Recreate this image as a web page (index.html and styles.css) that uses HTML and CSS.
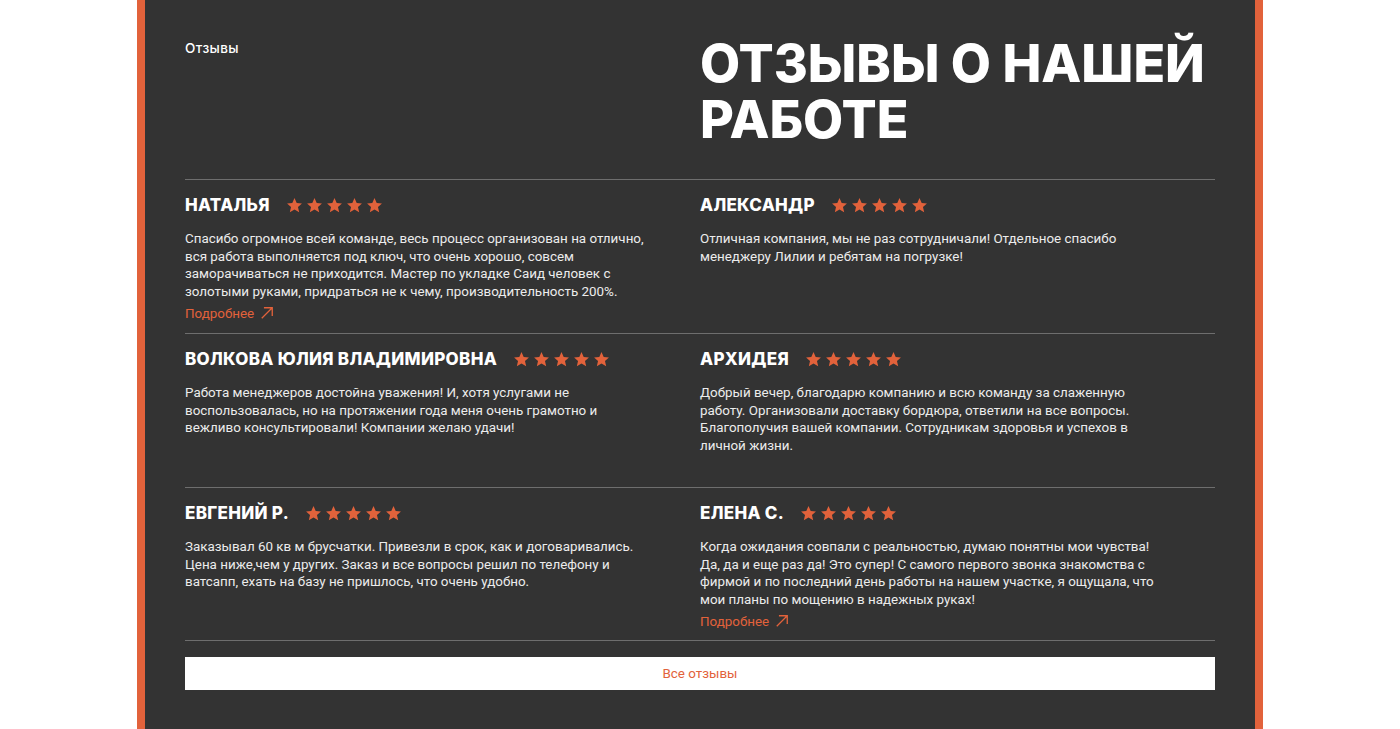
FILE: index.html
```html
<!DOCTYPE html>
<html lang="ru">

<head>
    <meta charset="UTF-8">
    <meta name="viewport" content="width=device-width, initial-scale=1.0">
    <title>Отзывы</title>
    <link rel="stylesheet" href="styles.css">
</head>

<body>
    <section class="reviews">
        <div class="reviews-head">
            <p class="reviews-label">Отзывы</p>
            <h2 class="reviews-title">Отзывы о нашей работе</h2>
        </div>

        <div class="reviews-grid">
            <div class="review">
                <div class="review-top">
                    <h3 class="review-name">Наталья</h3>
                    <div class="stars"></div>
                </div>
                <p class="review-text">Спасибо огромное всей команде, весь процесс организован на отлично, вся работа выполняется под ключ, что очень хорошо, совсем заморачиваться не приходится. Мастер по укладке Саид человек с золотыми руками, придраться не к чему, производительность 200%.</p>
                <a class="review-more" href="#">Подробнее <span class="arrow"></span></a>
            </div>
            <div class="review">
                <div class="review-top">
                    <h3 class="review-name">Александр</h3>
                    <div class="stars"></div>
                </div>
                <p class="review-text">Отличная компания, мы не раз сотрудничали! Отдельное спасибо менеджеру Лилии и ребятам на погрузке!</p>
            </div>

            <div class="review">
                <div class="review-top">
                    <h3 class="review-name">Волкова Юлия Владимировна</h3>
                    <div class="stars"></div>
                </div>
                <p class="review-text">Работа менеджеров достойна уважения! И, хотя услугами не воспользовалась, но на протяжении года меня очень грамотно и вежливо консультировали! Компании желаю удачи!</p>
            </div>
            <div class="review">
                <div class="review-top">
                    <h3 class="review-name">Архидея</h3>
                    <div class="stars"></div>
                </div>
                <p class="review-text">Добрый вечер, благодарю компанию и всю команду за слаженную работу. Организовали доставку бордюра, ответили на все вопросы. Благополучия вашей компании. Сотрудникам здоровья и успехов в личной жизни.</p>
            </div>

            <div class="review">
                <div class="review-top">
                    <h3 class="review-name">Евгений Р.</h3>
                    <div class="stars"></div>
                </div>
                <p class="review-text">Заказывал 60 кв м брусчатки. Привезли в срок, как и договаривались. Цена ниже,чем у других. Заказ и все вопросы решил по телефону и ватсапп, ехать на базу не пришлось, что очень удобно.</p>
            </div>
            <div class="review">
                <div class="review-top">
                    <h3 class="review-name">Елена С.</h3>
                    <div class="stars"></div>
                </div>
                <p class="review-text">Когда ожидания совпали с реальностью, думаю понятны мои чувства! Да, да и еще раз да! Это супер! С самого первого звонка знакомства с фирмой и по последний день работы на нашем участке, я ощущала, что мои планы по мощению в надежных руках!</p>
                <a class="review-more" href="#">Подробнее <span class="arrow"></span></a>
            </div>
        </div>

        <a class="reviews-all" href="#">Все отзывы</a>
    </section>

    <script>
        // five stars for every review
        const STAR = '<svg viewBox="0 0 24 24" width="17" height="17"><path d="M12 1.5l3.1 6.9 7.4.7-5.6 5 1.7 7.4L12 17.6l-6.6 3.9 1.7-7.4-5.6-5 7.4-.7z"/></svg>';
        const ARROW = '<svg viewBox="0 0 16 16" width="14" height="14"><path d="M2 14L14 2M4.5 2H14v9.5" fill="none" stroke="currentColor" stroke-width="1.5"/></svg>';

        document.querySelectorAll('.stars').forEach(el => {
            el.innerHTML = STAR.repeat(5);
        });
        document.querySelectorAll('.arrow').forEach(el => {
            el.innerHTML = ARROW;
        });
    </script>
</body>

</html>
```

FILE: styles.css
```css
:root {
    --dark: #333333;
    --orange: #e2623b;
    --line: #6e6e6e;
    --text: #ececec;
}

* {
    margin: 0;
    padding: 0;
    box-sizing: border-box;
}

a {
    all: unset;
    cursor: pointer;
}

body {
    background-color: #ffffff;
    font-family: Roboto, "Noto Sans", sans-serif;
}

.reviews {
    width: 1126px;
    margin: 0 auto;
    min-height: 729px;
    background-color: var(--dark);
    border-left: 8px solid var(--orange);
    border-right: 8px solid var(--orange);
    padding: 36px 40px 39px;
    color: #ffffff;
}

.reviews-head {
    display: grid;
    grid-template-columns: 515px 1fr;
    padding-bottom: 31px;
}

.reviews-label {
    font-family: Inter, sans-serif;
    font-weight: 500;
    font-size: 13.5px;
    letter-spacing: 0.4px;
    padding-top: 4px;
}

.reviews-title {
    font-family: Inter, sans-serif;
    font-weight: 800;
    font-size: 52px;
    line-height: 56px;
    text-transform: uppercase;
}

.reviews-grid {
    display: grid;
    grid-template-columns: 515px 515px;
    border-bottom: 1px solid var(--line);
}

.review {
    min-height: 154px;
    border-top: 1px solid var(--line);
    padding: 13px 0 10px;
    display: flex;
    flex-direction: column;
}

/* last row sits one pixel tighter */
.review:nth-last-child(-n+2) {
    min-height: 153px;
}

.review-top {
    display: flex;
    align-items: center;
    gap: 16px;
    height: 24px;
}

.review-name {
    font-family: Inter, sans-serif;
    font-size: 17px;
    font-weight: 800;
    letter-spacing: 0.3px;
    text-transform: uppercase;
}

.stars {
    display: flex;
    gap: 3px;
}

.stars svg {
    fill: var(--orange);
}

.review-text {
    margin-top: 13px;
    width: 470px;
    font-size: 13.4px;
    line-height: 17.5px;
    color: var(--text);
}

.review-more {
    margin-top: 4px;
    display: flex;
    align-items: center;
    gap: 6px;
    height: 18px;
    font-size: 13.4px;
    color: var(--orange);
}

.review-more .arrow {
    display: flex;
}

.reviews-all {
    display: block;
    margin-top: 16px;
    height: 33px;
    line-height: 33px;
    background-color: #ffffff;
    color: var(--orange);
    text-align: center;
    font-size: 13.4px;
}
```
